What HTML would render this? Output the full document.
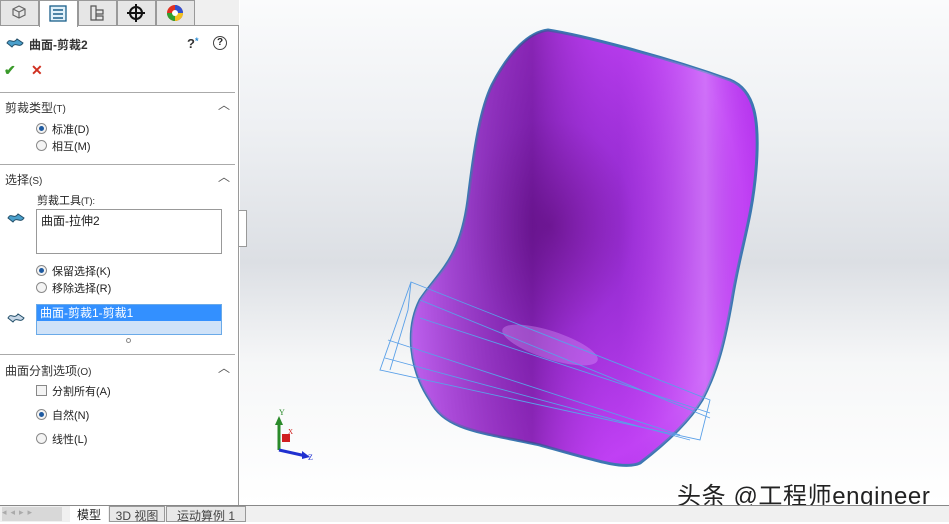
<!DOCTYPE html>
<html><head><meta charset="utf-8"><style>
*{margin:0;padding:0;box-sizing:border-box}
body{width:949px;height:522px;overflow:hidden;position:relative;font-family:"Liberation Sans","Noto Sans CJK SC",sans-serif;font-size:11px;color:#222;background:#fff}
#panel{position:absolute;left:0;top:0;width:239px;height:505px;background:#fff;border-right:1px solid #9a9a9a}
.tabs{position:absolute;top:0;left:0;width:239px;height:26px;background:#f0f0f0;border-bottom:1px solid #999}
.tab{position:absolute;top:0;width:39px;height:26px;border:1px solid #999;background:#e6e6e6}
.tab.act{background:#fff;border-bottom:none;height:27px}
.abs{position:absolute;white-space:nowrap}
.hdr{font-size:12px;font-weight:bold;color:#333}
.sec{position:absolute;left:0;width:235px;border-top:1px solid #aaa}
.rad{position:absolute;width:11px;height:11px;border-radius:50%;border:1px solid #8a8a8a;background:#f4f4f4}
.rad.on::after{content:"";position:absolute;left:2px;top:2px;width:5px;height:5px;border-radius:50%;background:#1e5aa0}
.car{position:absolute;right:8px;font-size:12px;color:#555}
#vp{position:absolute;left:240px;top:0;width:709px;height:505px;background:linear-gradient(180deg,#fafbfc 0%,#eef0f3 25%,#dcdfe4 52%,#f6f7f8 72%,#fff 100%)}
#bot{position:absolute;left:0;top:505px;width:949px;height:17px;background:#f0f0f0;border-top:1px solid #888}
</style></head><body>
<div id="vp">
<svg width="709" height="505" style="position:absolute;left:0;top:0">
<defs>
<radialGradient id="g1" cx="0.4" cy="0.45" r="0.7">
<stop offset="0" stop-color="#6a1490"/><stop offset="0.35" stop-color="#9b2fd6"/><stop offset="0.8" stop-color="#c040f4"/><stop offset="1" stop-color="#b030ea"/>
</radialGradient>
<linearGradient id="g2" x1="0" y1="0" x2="1" y2="0">
<stop offset="0" stop-color="#c070ee" stop-opacity="0.7"/><stop offset="0.35" stop-color="#5e1080" stop-opacity="0.5"/><stop offset="0.6" stop-color="#c040f4" stop-opacity="0"/><stop offset="0.85" stop-color="#e0a0ff" stop-opacity="0.5"/><stop offset="1" stop-color="#c040f4" stop-opacity="0"/>
</linearGradient>
</defs>
<path d="M308,30 C340,35 420,55 490,80 C515,90 520,120 516,170 C512,220 500,250 492,300 C485,340 478,370 462,400 C450,420 430,440 400,463 C385,470 360,462 300,445 C240,432 205,430 190,400 C170,370 165,330 180,300 C200,270 220,260 228,200 C234,150 240,110 252,85 C270,50 290,32 308,30 Z" fill="url(#g1)" stroke="#3a78b0" stroke-width="3"/>
<path d="M308,30 C340,35 420,55 490,80 C515,90 520,120 516,170 C512,220 500,250 492,300 C485,340 478,370 462,400 C450,420 430,440 400,463 C385,470 360,462 300,445 C240,432 205,430 190,400 C170,370 165,330 180,300 C200,270 220,260 228,200 C234,150 240,110 252,85 C270,50 290,32 308,30 Z" fill="url(#g2)"/>
<ellipse cx="310" cy="345" rx="50" ry="14" fill="#e0a0ff" opacity="0.35" transform="rotate(18 310 345)"/>
<g fill="none" stroke="#5aa0e8" stroke-width="0.9">
<path d="M171,282 L470,400 L460,440 L140,370 Z"/>
<path d="M171,282 L168,310 L150,370"/>
<path d="M180,300 L470,418"/><path d="M180,318 L470,413"/>
<path d="M145,358 L450,440"/><path d="M148,340 L440,435"/>
</g>
<g>
<line x1="39" y1="450" x2="39" y2="420" stroke="#2a8a2a" stroke-width="3"/>
<polygon points="35,425 43,425 39,416" fill="#2a8a2a"/>
<line x1="39" y1="450" x2="66" y2="456" stroke="#2030d0" stroke-width="3"/>
<polygon points="62,451 70,457 62,459" fill="#2030d0"/>
<rect x="42" y="434" width="8" height="8" fill="#d02020"/>
<text x="39" y="415" font-size="8" fill="#2a8a2a" font-family="Liberation Serif">Y</text>
<text x="68" y="460" font-size="8" fill="#2030d0" font-family="Liberation Serif">Z</text>
<text x="48" y="434" font-size="7" fill="#d02020" font-family="Liberation Serif">X</text>
</g>
</svg>
<div class="abs" style="left:437px;top:476px;font-size:24px;letter-spacing:0.6px;color:#222;text-shadow:1px 1px 0 #fff">头条 @工程师engineer</div>
</div>
<div id="panel">
<div class="tabs">
<div class="tab" style="left:0"><svg width="37" height="24"><path d="M12,8 l6,-3 6,3 0,6 -6,3 -6,-3z M18,11 l6,-3 M18,11 v6 M12,8 l6,3" fill="none" stroke="#666" stroke-width="1.2"/></svg></div>
<div class="tab act" style="left:39px"><svg width="37" height="24"><rect x="10" y="5" width="16" height="15" fill="#dff0fa" stroke="#1a5f8a" stroke-width="1.3"/><g stroke="#1a5f8a" stroke-width="1.5"><line x1="13" y1="9" x2="23" y2="9"/><line x1="13" y1="13" x2="23" y2="13"/><line x1="13" y1="17" x2="23" y2="17"/></g></svg></div>
<div class="tab" style="left:78px"><svg width="37" height="24"><path d="M12,5 h5 v14 h-5z M17,9 h7 v4 h-7 M17,15 h7 v4 h-7" fill="none" stroke="#555" stroke-width="1.2"/></svg></div>
<div class="tab" style="left:117px"><svg width="37" height="24"><circle cx="18" cy="12" r="6" fill="none" stroke="#111" stroke-width="2"/><path d="M18,3 v18 M9,12 h18" stroke="#111" stroke-width="2"/></svg></div>
<div class="tab" style="left:156px"><svg width="37" height="24"><circle cx="18" cy="12" r="8" fill="#e03020"/><path d="M18,12 L10,12 A8,8 0 0 0 18,20Z" fill="#30a030"/><path d="M18,12 L18,20 A8,8 0 0 0 26,12Z" fill="#f0c020"/><path d="M18,12 L26,12 A8,8 0 0 0 18,4Z" fill="#3050d0"/><circle cx="18" cy="12" r="3" fill="#fff"/></svg></div>
</div>
<svg class="abs" style="left:5px;top:35px" width="20" height="16"><path d="M2,8 C5,2 8,10 12,4 L18,8 C14,14 11,6 7,12Z" fill="#4aa0cc" stroke="#24506a"/></svg>
<div class="abs hdr" style="left:29px;top:36px">曲面-剪裁2</div>
<div class="abs" style="left:187px;top:36px;font-size:13px;font-weight:bold;color:#333">?<span style="color:#2a8ad0;font-size:9px;vertical-align:top">*</span></div>
<div class="abs" style="left:213px;top:36px;width:14px;height:14px;border:1.5px solid #444;border-radius:50%;font-size:10px;font-weight:bold;text-align:center;line-height:11px">?</div>
<div class="abs" style="left:4px;top:62px;color:#3a9a2a;font-size:14px;font-weight:bold">✔</div>
<div class="abs" style="left:31px;top:62px;color:#d03020;font-size:14px;font-weight:bold">✕</div>
<div class="sec" style="top:92px"></div>
<div class="abs hdr" style="left:5px;top:99px;font-weight:normal;font-size:12px">剪裁类型<span style="font-size:10px">(T)</span></div>
<div class="car" style="top:96px">︿</div>
<div class="rad on" style="left:36px;top:123px"></div><div class="abs" style="left:52px;top:121px">标准(D)</div>
<div class="rad" style="left:36px;top:140px"></div><div class="abs" style="left:52px;top:138px">相互(M)</div>
<div class="sec" style="top:164px"></div>
<div class="abs hdr" style="left:5px;top:171px;font-weight:normal;font-size:12px">选择<span style="font-size:10px">(S)</span></div>
<div class="car" style="top:168px">︿</div>
<div class="abs" style="left:37px;top:192px">剪裁工具<span style="font-size:9px">(T):</span></div>
<svg class="abs" style="left:6px;top:210px" width="20" height="16"><path d="M2,8 C5,2 8,10 12,4 L18,8 C14,14 11,6 7,12Z" fill="#4aa0cc" stroke="#24506a"/></svg>
<div class="abs" style="left:36px;top:209px;width:186px;height:45px;border:1px solid #999;padding:2px 4px;font-size:12px">曲面-拉伸2</div>
<div class="rad on" style="left:36px;top:265px"></div><div class="abs" style="left:52px;top:263px">保留选择(K)</div>
<div class="rad" style="left:36px;top:282px"></div><div class="abs" style="left:52px;top:280px">移除选择(R)</div>
<svg class="abs" style="left:6px;top:310px" width="20" height="16"><path d="M2,8 C5,2 8,10 12,4 L18,8 C14,14 11,6 7,12Z" fill="#c8d8e8" stroke="#24506a"/></svg>
<div class="abs" style="left:36px;top:304px;width:186px;height:31px;border:1px solid #6aaae8;background:#cfe2f8">
<div style="background:#3390ff;color:#fff;height:16px;padding:1px 3px;font-size:12px;line-height:14px">曲面-剪裁1-剪裁1</div></div>
<div class="abs" style="left:126px;top:338px;width:5px;height:5px;border-radius:50%;border:1px solid #888"></div>
<div class="sec" style="top:354px"></div>
<div class="abs hdr" style="left:5px;top:362px;font-weight:normal;font-size:12px">曲面分割选项<span style="font-size:10px">(O)</span></div>
<div class="car" style="top:359px">︿</div>
<div class="abs" style="left:36px;top:385px;width:11px;height:11px;border:1px solid #888;background:#f4f4f4"></div><div class="abs" style="left:52px;top:383px">分割所有(A)</div>
<div class="rad on" style="left:36px;top:409px"></div><div class="abs" style="left:52px;top:407px">自然(N)</div>
<div class="rad" style="left:36px;top:433px"></div><div class="abs" style="left:52px;top:431px">线性(L)</div>
</div>
<div class="abs" style="left:239px;top:210px;width:8px;height:37px;border:1px solid #999;border-left:none;background:#fff"></div>
<div id="bot">
<div class="abs" style="left:2px;top:1px;width:60px;height:14px;background:#d8d8d8;color:#aaa;font-size:9px;letter-spacing:4px">◂◂▸▸</div>
<div class="abs" style="left:70px;top:0;width:38px;height:16px;background:#fff;font-size:12px;text-align:center">模型</div>
<div class="abs" style="left:109px;top:0;width:56px;height:16px;border:1px solid #999;background:#e8e8e8;font-size:12px;text-align:center;color:#444">3D 视图</div>
<div class="abs" style="left:166px;top:0;width:80px;height:16px;border:1px solid #999;background:#e8e8e8;font-size:12px;text-align:center;color:#444">运动算例 1</div>
</div>
</body></html>
